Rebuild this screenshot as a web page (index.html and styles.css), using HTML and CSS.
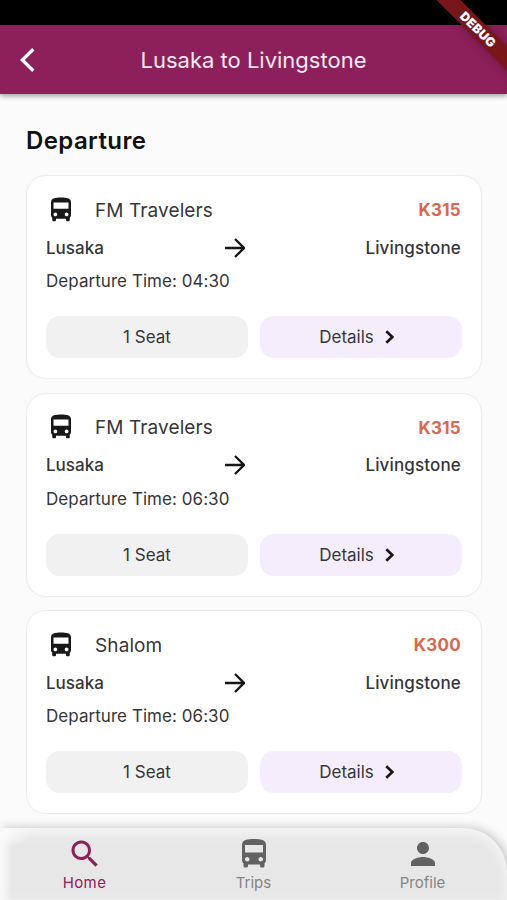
FILE: index.html
```html
<!DOCTYPE html>
<html lang="en">
<head>
<meta charset="utf-8">
<title>Lusaka to Livingstone</title>
<link rel="stylesheet" href="styles.css">
</head>
<body>
<svg width="0" height="0" class="defs">
  <symbol id="bus" viewBox="0 0 24 24"><path d="M4 16c0 .88.39 1.67 1 2.22V20c0 .55.45 1 1 1h1c.55 0 1-.45 1-1v-1h8v1c0 .55.45 1 1 1h1c.55 0 1-.45 1-1v-1.78c.61-.55 1-1.34 1-2.22V6c0-3.5-3.58-4-8-4s-8 .5-8 4v10zm3.5 1c-.83 0-1.5-.67-1.5-1.5S6.67 14 7.5 14s1.500.67 1.500 1.500S8.330 17 7.500 17zm9 0c-.83 0-1.500-.67-1.500-1.500s.67-1.500 1.500-1.500 1.500.67 1.500 1.500-.67 1.500-1.500 1.500zm1.500-6H6V6h12v5z"/></symbol>
  <symbol id="arrow" viewBox="0 0 20 20"><path d="M0 10H18M10 1L19 10L10 19" fill="none" stroke="currentColor" stroke-width="2.300"/></symbol>
  <symbol id="chevron" viewBox="0 0 9 14"><path d="M1.300 1.200L7.300 7L1.300 12.800" fill="none" stroke="currentColor" stroke-width="2.600"/></symbol>
</svg>
<div class="screen">
  <div class="status"></div>
  <header class="appbar">
    <svg class="back" viewBox="0 0 15 24"><path d="M13.300 1.300L2.300 12L13.300 22.700" fill="none" stroke="currentColor" stroke-width="3.300"/></svg>
    <h1>Lusaka to Livingstone</h1>
  </header>
  <main>
    <h2>Departure</h2>
    <div class="list">
      <article class="card">
        <div class="top"><svg class="bus"><use href="#bus"/></svg><span class="name">FM Travelers</span><span class="price">K315</span></div>
        <div class="route"><span class="from">Lusaka</span><svg class="arrow"><use href="#arrow"/></svg><span class="to">Livingstone</span></div>
        <div class="time">Departure Time: 04:30</div>
        <div class="actions"><div class="pill seat"><span>1 Seat</span></div><div class="pill details"><span>Details</span><svg class="chev"><use href="#chevron"/></svg></div></div>
      </article>
      <article class="card">
        <div class="top"><svg class="bus"><use href="#bus"/></svg><span class="name">FM Travelers</span><span class="price">K315</span></div>
        <div class="route"><span class="from">Lusaka</span><svg class="arrow"><use href="#arrow"/></svg><span class="to">Livingstone</span></div>
        <div class="time">Departure Time: 06:30</div>
        <div class="actions"><div class="pill seat"><span>1 Seat</span></div><div class="pill details"><span>Details</span><svg class="chev"><use href="#chevron"/></svg></div></div>
      </article>
      <article class="card">
        <div class="top"><svg class="bus"><use href="#bus"/></svg><span class="name">Shalom</span><span class="price">K300</span></div>
        <div class="route"><span class="from">Lusaka</span><svg class="arrow"><use href="#arrow"/></svg><span class="to">Livingstone</span></div>
        <div class="time">Departure Time: 06:30</div>
        <div class="actions"><div class="pill seat"><span>1 Seat</span></div><div class="pill details"><span>Details</span><svg class="chev"><use href="#chevron"/></svg></div></div>
      </article>
    </div>
  </main>
  <nav class="tabs">
    <div class="tab active"><svg viewBox="0 0 24 24"><path d="M15.500 14h-.79l-.28-.27C15.410 12.590 16 11.110 16 9.500 16 5.910 13.090 3 9.500 3S3 5.910 3 9.500 5.910 16 9.500 16c1.610 0 3.090-.59 4.230-1.570l.27.28v.79l5 4.990L20.490 19l-4.990-5zm-6 0C7.010 14 5 11.990 5 9.500S7.010 5 9.500 5 14 7.010 14 9.500 11.990 14 9.500 14z"/></svg><span>Home</span></div>
    <div class="tab"><svg><use href="#bus"/></svg><span>Trips</span></div>
    <div class="tab"><svg viewBox="0 0 24 24"><path d="M12 12c2.210 0 4-1.790 4-4s-1.790-4-4-4-4 1.790-4 4 1.790 4 4 4zm0 2c-2.670 0-8 1.340-8 4v2h16v-2c0-2.660-5.330-4-8-4z"/></svg><span>Profile</span></div>
  </nav>
  <div class="debug">DEBUG</div>
</div>
</body>
</html>
```

FILE: styles.css
```css
* { box-sizing: border-box; }
body { margin: 0; font-family: Inter, "Liberation Sans", sans-serif; color: #363639; }
svg { display: block; fill: currentColor; flex: none; }
.defs { position: absolute; }
.screen {
  position: relative;
  display: flex;
  flex-direction: column;
  width: 507px;
  height: 900px;
  overflow: hidden;
  background: #fbfbfb;
}
.status { height: 25px; background: #000; flex: none; }
.appbar {
  display: flex;
  align-items: center;
  height: 69px;
  flex: none;
  padding: 0 20px;
  background: #8d205a;
  color: #fbe9f3;
  box-shadow: 0 2px 5px rgba(0, 0, 0, .38);
}
.back { width: 15px; height: 24px; color: #fff; }
.appbar h1 {
  flex: 1;
  margin: 0 15px 0 0;
  text-align: center;
  font-size: 22px;
  font-weight: 400;
  line-height: 28px;
}
main { flex: 1; min-height: 0; padding: 31px 25px 0 26px; }
h2 { margin: 0; font-size: 24px; line-height: 32px; font-weight: 600; letter-spacing: .4px; color: #101212; }
.list { display: flex; flex-direction: column; gap: 13.5px; margin-top: 18px; }
.card {
  height: 204px;
  flex: none;
  padding: 20px 20px 0 19px;
  background: #fff;
  border: 1px solid #ededed;
  border-radius: 20px;
  box-shadow: 0 0 2px rgba(0, 0, 0, .04);
}
.top { display: flex; align-items: center; height: 28px; }
.bus { width: 30px; height: 30px; margin-top: -1px; color: #181818; }
.name { margin-left: 19px; font-size: 19px; letter-spacing: .1px; }
.price { margin-left: auto; font-size: 17px; font-weight: 700; color: #dc674c; letter-spacing: .3px; }
.route {
  display: flex;
  justify-content: space-between;
  align-items: center;
  height: 24px;
  margin-top: 11.500px;
  font-size: 17px;
  font-weight: 500;
}
.to { letter-spacing: .15px; }
.arrow { width: 20px; height: 20px; color: #151515; }
.time { height: 24px; margin-top: 9.500px; font-size: 17px; line-height: 24px; letter-spacing: .05px; }
.actions { display: grid; grid-template-columns: 1fr 1fr; gap: 12px; margin: 23px -1px 0 0; }
.pill { display: flex; align-items: center; justify-content: center; height: 42px; border-radius: 14px; font-size: 17px; }
.seat { background: #f1f1f1; }
.details { background: #f4eefc; gap: 11px; padding-right: 9px; }
.chev { width: 9px; height: 14px; color: #171717; }
.tabs {
  position: relative;
  display: flex;
  height: 72px;
  flex: none;
  border-radius: 0 44px 0 0;
  background:
    radial-gradient(ellipse 34px 22px at 0 0, #fbfbfb 25%, rgba(251, 251, 251, 0)),
    linear-gradient(90deg, #fafafa, rgba(250, 250, 250, 0) 12px),
    #e7e7e7;
  box-shadow: 3px -1px 10px rgba(0, 0, 0, .2), inset 0 4px 12px #f8f8f8;
}
.tab { display: flex; flex: 1; flex-direction: column; align-items: center; padding-top: 8px; font-size: 15px; color: #858585; }
.tab svg { width: 36px; height: 36px; color: #626262; }
.tab span { margin-top: 1px; line-height: 20px; }
.tab.active span { letter-spacing: .4px; }
.tab.active, .tab.active svg { color: #8d205a; }
.debug {
  position: absolute;
  top: 21px;
  right: -45.500px;
  width: 150px;
  height: 17px;
  transform: rotate(45deg);
  background: #791619;
  color: #fff;
  text-align: center;
  font-size: 12.500px;
  line-height: 17px;
  font-weight: 900;
  letter-spacing: .2px;
  box-shadow: 0 0 8px rgba(0, 0, 0, .35);
}
```
